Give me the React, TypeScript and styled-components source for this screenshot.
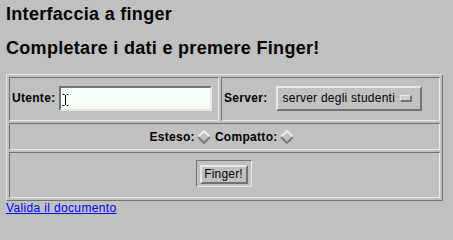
import styled, { createGlobalStyle } from "styled-components";

const light = "#e8e8e8";
const dark = "#727272";

const GlobalStyle = createGlobalStyle`
  html, body {
    margin: 0;
    background: #c0c0c0;
  }
  body {
    padding: 4px 6px 0;
    font-family: "Liberation Sans", Arial, sans-serif;
    color: #000;
  }
`;

const Heading = styled.h1<{ $gap?: number }>`
  margin: ${(p) => p.$gap ?? 0}px 0 0;
  font-size: 18px;
  line-height: 21px;
  font-weight: bold;
  letter-spacing: 0.3px;
`;

const FormTable = styled.table`
  margin-top: 15px;
  width: 437px;
  border-collapse: separate;
  border-spacing: 2px;
  border: 1px solid;
  border-color: ${light} ${dark} ${dark} ${light};
`;

const Cell = styled.td<{ $w?: number }>`
  padding: 0;
  border: 1px solid;
  border-color: ${dark} ${light} ${light} ${dark};
  width: ${(p) => (p.$w ? `${p.$w - 2}px` : "auto")};
`;

const FieldRow = styled.div<{ $gap: number }>`
  display: flex;
  align-items: center;
  gap: ${(p) => p.$gap}px;
  height: 40px;
  padding: 0 2px 2px;
`;

const OptionRow = styled.div`
  display: flex;
  align-items: center;
  justify-content: center;
  height: 25px;
  padding-right: 2px;
`;

const ButtonRow = styled.div`
  display: flex;
  justify-content: center;
  height: 37px;
  padding-top: 7px;
  padding-right: 2px;
`;

const Label = styled.span`
  font-size: 12px;
  font-weight: bold;
  letter-spacing: 0.3px;
  line-height: 14px;
`;

const InputWrap = styled.span`
  position: relative;
  display: inline-block;
`;

const TextInput = styled.input`
  box-sizing: border-box;
  width: 153px;
  height: 25px;
  margin: 0;
  padding: 0 4px;
  border: 2px solid;
  border-color: ${dark} ${light} ${light} ${dark};
  background: #f5fff8;
  font-family: "Liberation Sans", Arial, sans-serif;
  font-size: 12px;
  outline: none;
`;

const Caret = styled.svg`
  position: absolute;
  left: 3px;
  top: 8px;
  pointer-events: none;
`;

const OptionMenu = styled.div`
  box-sizing: border-box;
  width: 146px;
  height: 25px;
  display: flex;
  align-items: center;
  justify-content: space-between;
  padding: 0 8px 0 4px;
  border: 2px solid;
  border-color: ${light} ${dark} ${dark} ${light};
  font-size: 12px;
  letter-spacing: 0.25px;
`;

const MenuMark = styled.span`
  box-sizing: border-box;
  width: 12px;
  height: 7px;
  border: 1px solid;
  border-color: ${light} ${dark} ${dark} ${light};
  border-right-width: 2px;
  border-bottom-width: 2px;
  background: #d0d0d0;
`;

const Diamond = styled.svg`
  margin: 0 4px 0 2px;
`;

const DefaultRing = styled.div`
  padding: 3px 3px 2px;
  height: fit-content;
  border: 1px solid;
  border-color: ${dark} ${light} ${light} ${dark};
`;

const PushButton = styled.button`
  box-sizing: border-box;
  width: 48px;
  height: 19px;
  margin: 0;
  padding: 0;
  border: 2px solid;
  border-color: ${light} ${dark} ${dark} ${light};
  background: #c0c0c0;
  font-family: "Liberation Sans", Arial, sans-serif;
  font-size: 12px;
  letter-spacing: 0.2px;
  color: #000;
`;

const ValidLink = styled.a`
  display: block;
  color: #0000ff;
  font-size: 12px;
  line-height: 14px;
  letter-spacing: 0.35px;
  text-decoration: underline;
`;

const RadioDiamond = () => (
  <Diamond width="14" height="14" viewBox="0 0 14 14">
    <polygon points="7,1 13,7 7,13 1,7" fill="#c0c0c0" />
    <polyline points="1,7 7,1 13,7" fill="none" stroke="#ececec" strokeWidth="2" />
    <polyline points="1,7 7,13 13,7" fill="none" stroke="#7a7a7a" strokeWidth="2" />
  </Diamond>
);

export default function App() {
  return (
    <>
      <GlobalStyle />
      <Heading>Interfaccia a finger</Heading>
      <Heading $gap={13}>Completare i dati e premere Finger!</Heading>
      <form onSubmit={(e) => e.preventDefault()}>
        <FormTable>
          <tbody>
            <tr>
              <Cell $w={210}>
                <FieldRow $gap={4}>
                  <Label>Utente:</Label>
                  <InputWrap>
                    <TextInput name="utente" />
                    <Caret width="7" height="12" viewBox="0 0 7 12">
                      <path d="M0.5 0.5h2M4.5 0.5h2M3.5 1v10M0.5 11.5h2M4.5 11.5h2" stroke="#000" strokeWidth="1" fill="none" />
                    </Caret>
                  </InputWrap>
                </FieldRow>
              </Cell>
              <Cell $w={219}>
                <FieldRow $gap={9}>
                  <Label>Server:</Label>
                  <OptionMenu>
                    <span>server degli studenti</span>
                    <MenuMark />
                  </OptionMenu>
                </FieldRow>
              </Cell>
            </tr>
            <tr>
              <Cell colSpan={2}>
                <OptionRow>
                  <Label>Esteso:</Label>
                  <RadioDiamond />
                  <Label>Compatto:</Label>
                  <RadioDiamond />
                </OptionRow>
              </Cell>
            </tr>
            <tr>
              <Cell colSpan={2}>
                <ButtonRow>
                  <DefaultRing>
                    <PushButton type="submit">Finger!</PushButton>
                  </DefaultRing>
                </ButtonRow>
              </Cell>
            </tr>
          </tbody>
        </FormTable>
      </form>
      <ValidLink href="#">Valida il documento</ValidLink>
    </>
  );
}
